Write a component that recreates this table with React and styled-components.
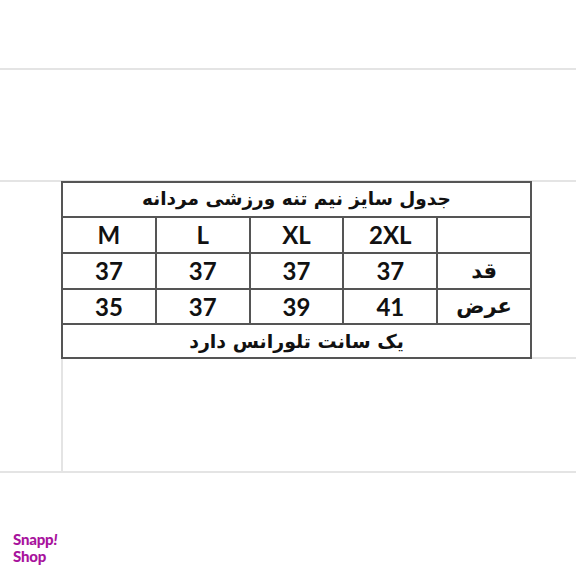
import React from "react";
import styled, { createGlobalStyle } from "styled-components";

const Global = createGlobalStyle`
  html, body { margin: 0; padding: 0; background: #fff; }
  body { width: 576px; height: 576px; overflow: hidden; font-family: "Lato", "DejaVu Sans", sans-serif; }
`;

const GRID = "#e4e4e4";

const Page = styled.div`
  width: 576px;
  height: 576px;
  display: flex;
  flex-direction: column;
`;

const Band = styled.div`
  height: ${(p) => p.$h}px;
  flex: none;
  border-bottom: 2px solid ${GRID};
  box-sizing: border-box;
`;

const Sheet = styled.div`
  display: flex;
  border-bottom: 2px solid ${GRID};
  height: 291px;
  box-sizing: border-box;
`;

const Gutter = styled.div`
  width: 61px;
  flex: none;
`;

const Main = styled.div`
  flex: 1;
  display: flex;
  flex-direction: column;
`;

const TableRow = styled.div`
  display: flex;
`;

const Filler = styled.div`
  flex: 1;
  border-bottom: 2px solid ${GRID};
`;

const Blank = styled.div`
  flex: 1;
  border-left: 2px solid ${GRID};
`;

const Table = styled.table`
  width: 471px;
  border-collapse: collapse;
  table-layout: fixed;
  direction: rtl;
  margin-top: -1px;
`;

const Cell = styled.td`
  border: 2px solid #555;
  height: ${(p) => p.$h || 32}px;
  padding: 0;
  text-align: center;
  vertical-align: middle;
  color: #111;
  font-weight: 700;
  font-size: ${(p) => p.$fs || 24}px;
  font-family: ${(p) => (p.$fa ? '"DejaVu Sans", sans-serif' : '"Lato", sans-serif')};
  line-height: 1;
`;

const Logo = styled.div`
  margin: 58px 0 0 13px;
  color: #a8139d;
  font-family: "Lato", "Open Sans", sans-serif;
  font-weight: 900;
  font-size: 15px;
  letter-spacing: -0.2px;
  display: flex;
  flex-direction: column;
`;

const LogoLine = styled.span`
  display: block;
  height: 17px;
  line-height: 17px;
`;

const Bang = styled.span`
  font-style: italic;
`;

const sizes = ["2XL", "XL", "L", "M"];
const rows = [
  { label: "قد", vals: ["37", "37", "37", "37"], h: 34 },
  { label: "عرض", vals: ["41", "39", "37", "35"], h: 33 },
];

export default function App() {
  return (
    <Page>
      <Global />
      <Band $h={70} />
      <Band $h={112} />
      <Sheet>
        <Gutter />
        <Main>
          <TableRow>
            <Table>
              <tbody>
                <tr>
                  <Cell colSpan={5} $fa $fs={18.5} $h={33}>جدول سایز نیم تنه ورزشی مردانه</Cell>
                </tr>
                <tr>
                  <Cell $h={34} />
                  {sizes.map((s) => (
                    <Cell key={s} $h={34}>{s}</Cell>
                  ))}
                </tr>
                {rows.map((r) => (
                  <tr key={r.label}>
                    <Cell $fa $fs={21} $h={r.h}>{r.label}</Cell>
                    {r.vals.map((v, i) => (
                      <Cell key={i} $h={r.h}>{v}</Cell>
                    ))}
                  </tr>
                ))}
                <tr>
                  <Cell colSpan={5} $fa $fs={19} $h={32}>یک سانت تلورانس دارد</Cell>
                </tr>
              </tbody>
            </Table>
            <Filler />
          </TableRow>
          <Blank />
        </Main>
      </Sheet>
      <Logo>
        <LogoLine>
          Snapp<Bang>!</Bang>
        </LogoLine>
        <LogoLine>Shop</LogoLine>
      </Logo>
    </Page>
  );
}
